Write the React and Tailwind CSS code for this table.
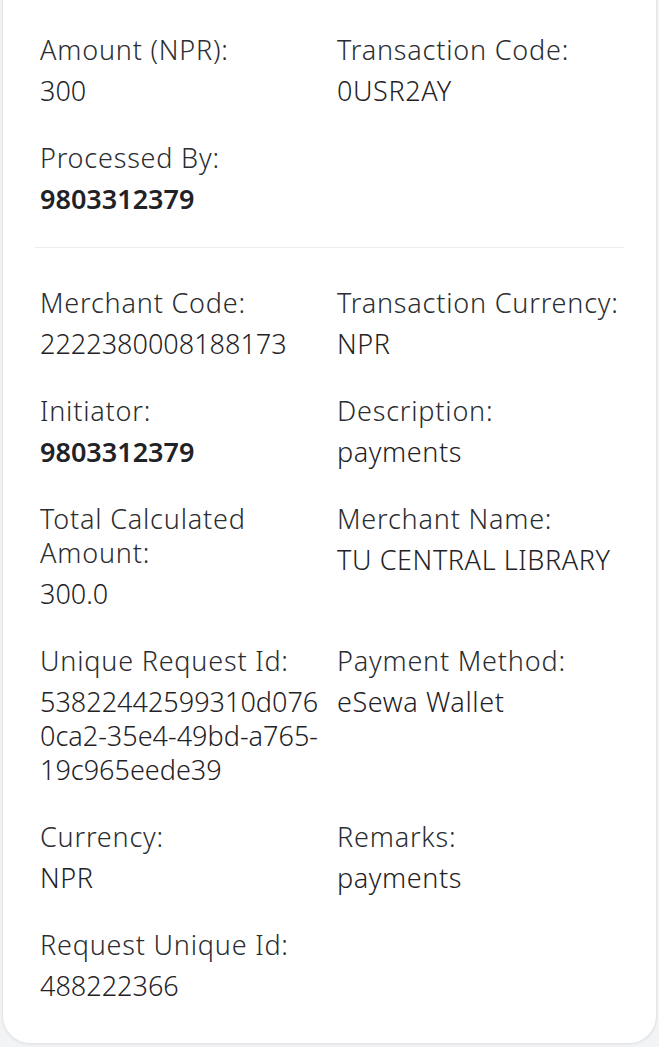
import React from "react";

const topFields = [
  { label: "Amount (NPR):", value: "300" },
  { label: "Transaction Code:", value: "0USR2AY" },
  { label: "Processed By:", value: "9803312379", bold: true },
];

const detailFields = [
  { label: "Merchant Code:", value: "2222380008188173" },
  { label: "Transaction Currency:", value: "NPR" },
  { label: "Initiator:", value: "9803312379", bold: true },
  { label: "Description:", value: "payments" },
  { label: "Total Calculated Amount:", value: "300.0" },
  { label: "Merchant Name:", value: "TU CENTRAL LIBRARY" },
  {
    label: "Unique Request Id:",
    value: "53822442599310d0760ca2-35e4-49bd-a765-19c965eede39",
    id: true,
  },
  { label: "Payment Method:", value: "eSewa Wallet" },
  { label: "Currency:", value: "NPR" },
  { label: "Remarks:", value: "payments" },
  { label: "Request Unique Id:", value: "488222366" },
];

const Field = ({ label, value, bold, id }) => {
  // numbers in the app render a bit tighter than words
  const numeric = id || /^[\d.]+$/.test(value);
  return (
    <div className="px-[5px] min-w-0">
      <p className="leading-[34px] tracking-[0.8px] text-[#2a2d31]">{label}</p>
      <p
        className={`mt-[7px] leading-[34px] text-[#1f2226] [overflow-wrap:anywhere] ${
          bold ? "font-semibold" : "font-[350]"
        } ${numeric ? "tracking-normal" : "tracking-[0.6px]"}`}
      >
        {value}
      </p>
    </div>
  );
};

const FieldGrid = ({ fields }) => (
  <div className="grid grid-cols-[297px_1fr] gap-y-[33px]">
    {fields.map((f) => (
      <Field key={f.label} {...f} />
    ))}
  </div>
);

export default function App() {
  return (
    <div
      className="min-h-screen bg-[#f3f4f6] px-[2px]"
      style={{ fontFamily: '"Noto Sans", "Open Sans", sans-serif' }}
    >
      <div className="h-[1044px] bg-white rounded-b-[28px] border-x border-b border-[#e3e5e8] shadow-[0_1px_3px_rgba(0,0,0,0.06)] px-[32px] text-[27px] font-[350]">
        {/* Summary */}
        <div className="pt-[33px] pb-[31px] border-b border-[#ececee]">
          <FieldGrid fields={topFields} />
        </div>

        {/* Details */}
        <div className="pt-[38px] pb-[38px]">
          <FieldGrid fields={detailFields} />
        </div>
      </div>
    </div>
  );
}
